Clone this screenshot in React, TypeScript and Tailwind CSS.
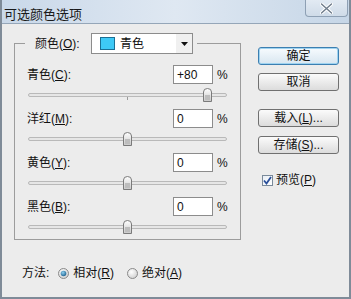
import React from "react";

const FONT = { fontFamily: '"Liberation Sans", "Noto Sans CJK SC", sans-serif' };

function Mn({ children }: { children: React.ReactNode }) {
  return <span className="underline underline-offset-[1px]">{children}</span>;
}

function Thumb() {
  return (
    <svg width="9" height="14" viewBox="0 0 9 14" className="block">
      <defs>
        <linearGradient id="tg" x1="0" y1="0" x2="0" y2="1">
          <stop offset="0" stopColor="#ffffff" />
          <stop offset="1" stopColor="#c8c8c8" />
        </linearGradient>
      </defs>
      <path d="M0.5 13.5 V4 Q0.5 0.5 4.5 0.5 Q8.5 0.5 8.5 4 V13.5 Z" fill="url(#tg)" stroke="#7a7a7a" />
      <rect x="2" y="7" width="5" height="5" fill="#bdbdbd" />
    </svg>
  );
}

function Slider({ value }: { value: number }) {
  const pct = (value + 100) / 200;
  return (
    <div className="relative h-[14px] w-[199px]">
      <div className="absolute left-0 right-0 top-[5px] h-[4px] rounded-full border border-[#b9b9b9] bg-[#e6e6e6]" />
      <div className="absolute left-[99px] top-[9px] h-[3px] w-px bg-[#9a9a9a]" />
      <div className="absolute top-0" style={{ left: `${pct * 199 - 4.5}px` }}>
        <Thumb />
      </div>
    </div>
  );
}

function Row({ label, m, value, num }: { label: string; m: string; value: string; num: number }) {
  return (
    <div className="flex flex-col">
      <div className="flex h-[19px] items-center">
        <span className="w-[146px] text-[12px] text-[#111]">
          {label}(<Mn>{m}</Mn>):
        </span>
        <div className="flex h-[19px] w-[40px] items-center border border-[#8c8c8c] bg-white pl-[3px] text-[12px]">
          {value}
        </div>
        <span className="ml-[4px] text-[12px]">%</span>
      </div>
      <div className="ml-[1px] mt-[4px]">
        <Slider value={num} />
      </div>
    </div>
  );
}

function Btn({ children, def }: { children: React.ReactNode; def?: boolean }) {
  return (
    <div
      className={
        "flex h-[18px] w-[81px] items-center justify-center rounded-[3px] border text-[12px] " +
        (def
          ? "border-[#3c7fb1] bg-gradient-to-b from-[#f7fbfe] to-[#d8e6f0] shadow-[inset_0_0_0_1px_#9fd3f0]"
          : "border-[#707070] bg-gradient-to-b from-[#fbfbfb] to-[#dcdcdc]")
      }
    >
      {children}
    </div>
  );
}

function Radio({ on }: { on?: boolean }) {
  return (
    <svg width="11" height="11" viewBox="0 0 11 11" className="block">
      <defs>
        <radialGradient id={on ? "ron" : "roff"} cx="0.4" cy="0.35" r="0.7">
          <stop offset="0" stopColor="#ffffff" />
          <stop offset="1" stopColor="#cfcfcf" />
        </radialGradient>
        <radialGradient id="dot" cx="0.4" cy="0.35" r="0.7">
          <stop offset="0" stopColor="#8fd0f0" />
          <stop offset="1" stopColor="#1a5e8c" />
        </radialGradient>
      </defs>
      <circle cx="5.5" cy="5.5" r="5" fill={`url(#${on ? "ron" : "roff"})`} stroke="#8a8a8a" />
      {on && <circle cx="5.5" cy="5.5" r="2.8" fill="url(#dot)" />}
    </svg>
  );
}

export default function App() {
  return (
    <div
      className="flex h-[299px] w-[351px] flex-col overflow-hidden border-x-2 border-b-2 border-[#7f8b98] bg-[#ececec] text-[#111]"
      style={FONT}
    >
      {/* title bar */}
      <div className="flex h-[24px] shrink-0 items-start justify-between border-b border-[#95a6b8] bg-gradient-to-r from-[#c9d8e9] via-[#dfe8f2] to-[#c6d6e7]">
        <span className="ml-[2px] mt-[5px] text-[13px] text-[#1a1a1a]">可选颜色选项</span>
        <div className="mr-[1px] flex h-[17px] w-[43px] items-center justify-center rounded-b-[4px] border border-t-0 border-[#8ea0b4] bg-gradient-to-b from-[#e2eaf3] to-[#cfdbe8]">
          <svg width="13" height="11" viewBox="0 0 13 11">
            <path d="M1.5 1 L11.5 10 M11.5 1 L1.5 10" stroke="#ffffff" strokeWidth="3.4" strokeLinecap="round" />
            <path d="M1.5 1 L11.5 10 M11.5 1 L1.5 10" stroke="#6e7b8a" strokeWidth="1.4" strokeLinecap="round" />
          </svg>
        </div>
      </div>

      <div className="flex flex-1">
        {/* left */}
        <div className="flex flex-col pl-[12px] pt-[19px]">
          <div className="flex h-[197px] w-[227px] flex-col border border-[#9c9c9c] pl-[12px]">
            {/* legend */}
            <div className="-mt-[11px] ml-[-2px] flex h-[21px] w-[172px] items-center bg-[#ececec] pl-[10px]">
              <span className="w-[56px] text-[12px]">
                颜色(<Mn>O</Mn>):
              </span>
              <div className="flex h-[21px] w-[102px] items-center border border-[#8c8c8c] bg-white">
                <div className="ml-[8px] h-[13px] w-[15px] border border-[#1b6f95] bg-[#3ec9f6]" />
                <span className="ml-[5px] flex-1 text-[12px]">青色</span>
                <div className="flex h-[19px] w-[16px] items-center justify-center bg-[#f0f0f0]">
                  <svg width="7" height="4" viewBox="0 0 7 4">
                    <path d="M0 0 H7 L3.5 4 Z" fill="#111" />
                  </svg>
                </div>
              </div>
            </div>
            <div className="mt-[11px] flex flex-col gap-[7px]">
              <Row label="青色" m="C" value="+80" num={80} />
              <Row label="洋红" m="M" value="0" num={0} />
              <Row label="黄色" m="Y" value="0" num={0} />
              <Row label="黑色" m="B" value="0" num={0} />
            </div>
          </div>
          <div className="ml-[8px] mt-[24px] flex items-center text-[12px]">
            <span>方法:</span>
            <span className="ml-[9px]">
              <Radio on />
            </span>
            <span className="ml-[4px]">
              相对(<Mn>R</Mn>)
            </span>
            <span className="ml-[13px]">
              <Radio />
            </span>
            <span className="ml-[4px]">
              绝对(<Mn>A</Mn>)
            </span>
          </div>
        </div>

        {/* right */}
        <div className="ml-[17px] flex flex-col pt-[23px]">
          <Btn def>确定</Btn>
          <div className="mt-[8px]">
            <Btn>取消</Btn>
          </div>
          <div className="mt-[18px]">
            <Btn>
              载入(<Mn>L</Mn>)...
            </Btn>
          </div>
          <div className="mt-[9px]">
            <Btn>
              存储(<Mn>S</Mn>)...
            </Btn>
          </div>
          <div className="ml-[4px] mt-[17px] flex items-center text-[12px]">
            <div className="flex h-[11px] w-[11px] items-center justify-center border border-[#7a8a9a] bg-gradient-to-br from-[#e8eef5] to-[#ffffff]">
              <svg width="9" height="9" viewBox="0 0 9 9">
                <path d="M1 4.5 L3.5 7.5 L8 1" stroke="#2a4f9a" strokeWidth="1.8" fill="none" />
              </svg>
            </div>
            <span className="ml-[3px]">
              预览(<Mn>P</Mn>)
            </span>
          </div>
        </div>
      </div>
    </div>
  );
}
